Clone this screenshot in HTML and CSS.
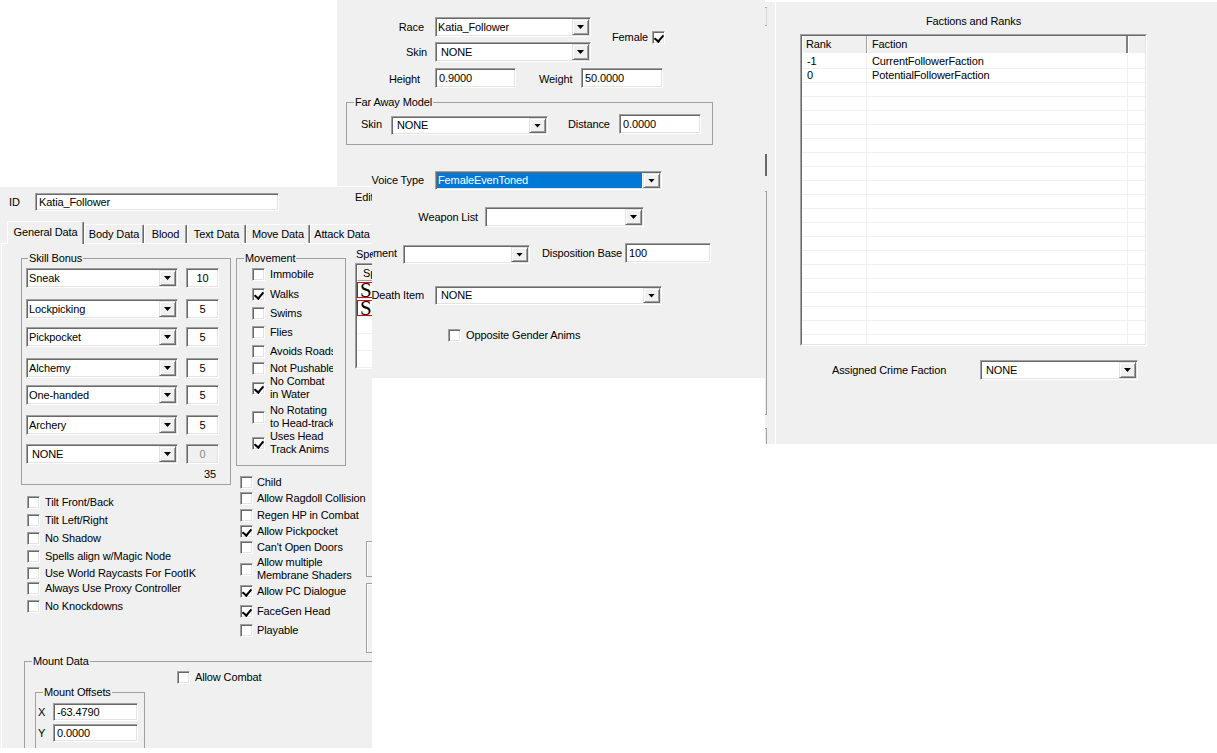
FILE: index.html
```html
<!DOCTYPE html>
<html>
<head>
<meta charset="utf-8">
<title>NPC Editor</title>
<link rel="stylesheet" href="styles.css">
</head>
<body>
<div class="desk">

  <section class="win win-mid">
    <div class="m-top">
      <div class="m-stack">
        <div class="row"><span class="lbl">Race</span><div class="field combo w156"><span class="val">Katia_Follower</span><span class="btn"></span></div></div>
        <div class="row"><span class="lbl pr8">Skin</span><div class="field combo w156"><span class="val ind">NONE</span><span class="btn"></span></div></div>
      </div>
      <div class="female"><span>Female</span><span class="cb on"></span></div>
    </div>
    <div class="row r-hw"><span class="lbl pr15 lo">Height</span><div class="field tb w81">0.9000</div><span class="wlbl lo">Weight</span><div class="field tb w82">50.0000</div></div>
    <fieldset class="grp fam"><legend>Far Away Model</legend>
      <div class="row fam-row"><span class="fam-skin">Skin</span><div class="field combo w157 h19 mt2"><span class="val ind">NONE</span><span class="btn"></span></div><span class="fam-dist">Distance</span><div class="field tb w82">0.0000</div></div>
    </fieldset>
    <div class="row r-voice"><span class="lbl">Voice Type</span><div class="field combo w227 h19 sel"><span class="val">FemaleEvenToned</span><span class="btn"></span></div></div>
    <div class="row r-weapon"><span class="lbl lbl-wl">Weapon List</span><div class="field combo w159"><span class="val"></span><span class="btn"></span></div></div>
    <div class="row r-equip"><span class="lbl lbl-eq">Equipment</span><div class="field combo w127 h19 mt2"><span class="val"></span><span class="btn"></span></div><span class="disp">Disposition Base</span><div class="field tb w86">100</div></div>
    <div class="row r-death"><span class="lbl">Death Item</span><div class="field combo w227 h19"><span class="val ind">NONE</span><span class="btn"></span></div></div>
    <div class="ck r-opp"><span class="cb"></span><span class="t">Opposite Gender Anims</span></div>
  </section>

  <section class="win win-gen">
    <div class="g-id"><span class="g-idl">ID</span><div class="field tb w244 h18">Katia_Follower</div><span class="g-edit">Edit</span></div>
    <div class="tabs">
      <span class="tab act">General Data</span>
      <span class="tab t60">Body Data</span>
      <span class="tab t43">Blood</span>
      <span class="tab t59">Text Data</span>
      <span class="tab t64">Move Data</span>
      <span class="tab t64">Attack Data</span>
    </div>
    <div class="page">
      <div class="cols">
        <div class="colL">
          <fieldset class="grp skill"><legend>Skill Bonus</legend>
            <div class="skrows">
              <div class="skrow"><div class="field combo w152"><span class="val">Sneak</span><span class="btn"></span></div><div class="field num">10</div></div>
              <div class="skrow g11"><div class="field combo w152"><span class="val">Lockpicking</span><span class="btn"></span></div><div class="field num">5</div></div>
              <div class="skrow g8"><div class="field combo w152"><span class="val">Pickpocket</span><span class="btn"></span></div><div class="field num">5</div></div>
              <div class="skrow g11"><div class="field combo w152"><span class="val">Alchemy</span><span class="btn"></span></div><div class="field num">5</div></div>
              <div class="skrow g7"><div class="field combo w152"><span class="val">One-handed</span><span class="btn"></span></div><div class="field num">5</div></div>
              <div class="skrow g10"><div class="field combo w152"><span class="val">Archery</span><span class="btn"></span></div><div class="field num">5</div></div>
              <div class="skrow g9"><div class="field combo w152"><span class="val ind">NONE</span><span class="btn"></span></div><div class="field num dis">0</div></div>
            </div>
            <div class="total">35</div>
          </fieldset>
          <div class="lchecks">
            <div class="ck"><span class="cb"></span><span class="t">Tilt Front/Back</span></div>
            <div class="ck mt5"><span class="cb"></span><span class="t">Tilt Left/Right</span></div>
            <div class="ck mt5"><span class="cb"></span><span class="t">No Shadow</span></div>
            <div class="ck mt5"><span class="cb"></span><span class="t">Spells align w/Magic Node</span></div>
            <div class="ck mt4"><span class="cb"></span><span class="t">Use World Raycasts For FootIK</span></div>
            <div class="ck mt2"><span class="cb"></span><span class="t">Always Use Proxy Controller</span></div>
            <div class="ck mt5"><span class="cb"></span><span class="t">No Knockdowns</span></div>
          </div>
        </div>
        <div class="colM">
          <fieldset class="grp move"><legend>Movement</legend>
            <div class="ck"><span class="cb"></span><span class="t">Immobile</span></div>
            <div class="ck mt7"><span class="cb on"></span><span class="t">Walks</span></div>
            <div class="ck mt6"><span class="cb"></span><span class="t">Swims</span></div>
            <div class="ck mt6"><span class="cb"></span><span class="t">Flies</span></div>
            <div class="ck mt6"><span class="cb"></span><span class="t">Avoids Roads</span></div>
            <div class="ck mt4"><span class="cb"></span><span class="t">Not Pushable</span></div>
            <div class="ck"><span class="cb on"></span><span class="t">No Combat<br>in Water</span></div>
            <div class="ck mt3"><span class="cb"></span><span class="t">No Rotating<br>to Head-track</span></div>
            <div class="ck"><span class="cb on"></span><span class="t">Uses Head<br>Track Anims</span></div>
          </fieldset>
          <div class="rchecks">
            <div class="ck"><span class="cb"></span><span class="t">Child</span></div>
            <div class="ck mt3"><span class="cb"></span><span class="t">Allow Ragdoll Collision</span></div>
            <div class="ck mt4"><span class="cb"></span><span class="t">Regen HP in Combat</span></div>
            <div class="ck mt3"><span class="cb on"></span><span class="t">Allow Pickpocket</span></div>
            <div class="ck mt3"><span class="cb"></span><span class="t">Can't Open Doors</span></div>
            <div class="ck mt2"><span class="cb"></span><span class="t">Allow multiple<br>Membrane Shaders</span></div>
            <div class="ck mt3"><span class="cb on"></span><span class="t">Allow PC Dialogue</span></div>
            <div class="ck mt7"><span class="cb on"></span><span class="t">FaceGen Head</span></div>
            <div class="ck mt6"><span class="cb"></span><span class="t">Playable</span></div>
          </div>
        </div>
        <div class="colR">
          <div class="spl">Spells</div>
          <div class="splist"><div class="splist-in">
            <div class="sph">Sp</div>
            <div class="spr"><span class="sbox">S</span></div>
            <div class="spr"><span class="sbox">S</span></div>
            <div class="spr"></div>
            <div class="spr"></div>
            <div class="spr"></div>
          </div></div>
          <div class="rbtn"></div>
          <div class="rgrp"></div>
        </div>
      </div>
      <fieldset class="grp mount"><legend>Mount Data</legend>
        <div class="ck mc"><span class="cb"></span><span class="t">Allow Combat</span></div>
        <fieldset class="grp offs"><legend>Mount Offsets</legend>
          <div class="offrow"><span class="offl">X</span><div class="field tb w85 h18">-63.4790</div></div>
          <div class="offrow mt3"><span class="offl">Y</span><div class="field tb w85 h18">0.0000</div></div>
        </fieldset>
      </fieldset>
    </div>
  </section>

  <section class="win win-fac">
    <div class="edge"><i class="e1"></i><i class="e2"></i><i class="e3"></i><i class="e4"></i></div>
    <div class="vline"></div>
    <div class="fac-main">
      <div class="fac-title">Factions and Ranks</div>
      <div class="lv"><div class="lv-in">
        <div class="lv-head"><span class="c1">Rank</span><span class="c2">Faction</span><span class="c3"></span></div>
        <div class="lv-body">
          <div class="lv-row"><span class="c1">-1</span><span class="c2">CurrentFollowerFaction</span><span class="c3"></span></div>
          <div class="lv-row"><span class="c1">0</span><span class="c2">PotentialFollowerFaction</span><span class="c3"></span></div>
          <div class="lv-row"><span class="c1"></span><span class="c2"></span><span class="c3"></span></div>
          <div class="lv-row"><span class="c1"></span><span class="c2"></span><span class="c3"></span></div>
          <div class="lv-row"><span class="c1"></span><span class="c2"></span><span class="c3"></span></div>
          <div class="lv-row"><span class="c1"></span><span class="c2"></span><span class="c3"></span></div>
          <div class="lv-row"><span class="c1"></span><span class="c2"></span><span class="c3"></span></div>
          <div class="lv-row"><span class="c1"></span><span class="c2"></span><span class="c3"></span></div>
          <div class="lv-row"><span class="c1"></span><span class="c2"></span><span class="c3"></span></div>
          <div class="lv-row"><span class="c1"></span><span class="c2"></span><span class="c3"></span></div>
          <div class="lv-row"><span class="c1"></span><span class="c2"></span><span class="c3"></span></div>
          <div class="lv-row"><span class="c1"></span><span class="c2"></span><span class="c3"></span></div>
          <div class="lv-row"><span class="c1"></span><span class="c2"></span><span class="c3"></span></div>
          <div class="lv-row"><span class="c1"></span><span class="c2"></span><span class="c3"></span></div>
          <div class="lv-row"><span class="c1"></span><span class="c2"></span><span class="c3"></span></div>
          <div class="lv-row"><span class="c1"></span><span class="c2"></span><span class="c3"></span></div>
          <div class="lv-row"><span class="c1"></span><span class="c2"></span><span class="c3"></span></div>
          <div class="lv-row"><span class="c1"></span><span class="c2"></span><span class="c3"></span></div>
          <div class="lv-row"><span class="c1"></span><span class="c2"></span><span class="c3"></span></div>
          <div class="lv-row"><span class="c1"></span><span class="c2"></span><span class="c3"></span></div>
          <div class="lv-row"><span class="c1"></span><span class="c2"></span><span class="c3"></span></div>
        </div>
      </div></div>
      <div class="crime"><span class="crime-l">Assigned Crime Faction</span><div class="field combo w158"><span class="val ind">NONE</span><span class="btn"></span></div></div>
    </div>
  </section>

</div>
</body>
</html>
```

FILE: styles.css
```css
* { box-sizing: border-box; }
html, body { margin: 0; padding: 0; background: #fff; }
body { font: 11px/13px "Liberation Sans", Arial, sans-serif; color: #000; letter-spacing: -0.12px; }

.desk { position: relative; width: 1217px; height: 753px; overflow: hidden; background: #fff; }
.win { position: absolute; background: #f0f0f0; overflow: hidden; }

/* ---------- shared controls ---------- */
.row { display: flex; align-items: center; }
.field {
  flex: none; display: flex; align-items: center; height: 20px;
  background: #fff; border: 1px solid; border-color: #a0a0a0 #fff #fff #a0a0a0;
  box-shadow: inset 1px 1px 0 #696969, inset -1px -1px 0 #e3e3e3;
  white-space: nowrap; overflow: hidden;
}
.tb { padding: 0 2px 0 3px; }
.h18 { height: 18px; }
.h19 { height: 19px; }
.combo { padding: 1px; }
.combo .val { flex: 1; min-width: 0; overflow: hidden; padding-left: 1px; align-self: stretch; display: flex; align-items: center; }
.combo .val.ind { padding-left: 4px; }
.combo.sel .val { background: #0078d7; color: #fff; margin-right: 1px; padding-left: 1px; }
.btn {
  flex: none; width: 17px; height: 16px; background: #f0f0f0;
  border: 1px solid; border-color: #e3e3e3 #696969 #696969 #e3e3e3;
  box-shadow: inset 1px 1px 0 #fff, inset -1px -1px 0 #a0a0a0;
  display: flex; align-items: center; justify-content: center; align-self: center;
}
.h19 .btn { height: 15px; }
.btn::after { content: ""; width: 7px; height: 4px; background: #000; clip-path: polygon(0 0, 100% 0, 50% 100%); }

.cb {
  flex: none; width: 13px; height: 13px; position: relative; background: #fff;
  border: 1px solid; border-color: #a0a0a0 #fff #fff #a0a0a0;
  box-shadow: inset 1px 1px 0 #696969, inset -1px -1px 0 #e3e3e3;
}
.cb.on::after {
  content: ""; position: absolute; left: 3px; top: 1px; width: 4px; height: 7px;
  border: solid #000; border-width: 0 2px 2px 0; transform: rotate(40deg);
}
.ck { display: flex; align-items: center; }
.ck .t { margin-left: 5px; white-space: nowrap; }

.grp { margin: 0; padding: 0; min-width: 0; border: 1px solid #a0a0a0; }
.grp > legend { padding: 0 1px; margin-left: 7px; line-height: 12px; }

.w81 { width: 81px; } .w82 { width: 82px; } .w85 { width: 85px; } .w86 { width: 86px; }
.w127 { width: 127px; } .w152 { width: 152px; } .w156 { width: 156px; } .w157 { width: 157px; }
.w158 { width: 158px; } .w159 { width: 159px; } .w227 { width: 227px; } .w244 { width: 244px; }
.mt2 { margin-top: 2px; } .mt3 { margin-top: 3px; } .mt4 { margin-top: 4px; }
.mt5 { margin-top: 5px; } .mt6 { margin-top: 6px; } .mt7 { margin-top: 7px; }

/* ---------- middle window ---------- */
.win-mid {
  left: 337px; top: 0; width: 428px; height: 378px; z-index: 3; padding-top: 17px;
  clip-path: polygon(0 0, 100% 0, 100% 100%, 35px 100%, 35px 186px, 0 186px);
}
.lbl { flex: none; width: 98px; padding-right: 11px; text-align: right; white-space: nowrap; }
.lbl.pr8 { padding-right: 8px; }
.lbl.pr15 { padding-right: 15px; }
.lo { position: relative; top: 1px; }
.m-top { display: flex; align-items: center; }
.m-stack { display: flex; flex-direction: column; gap: 5px; }
.female { display: flex; align-items: center; gap: 4px; margin-left: 21px; margin-bottom: 4px; }
.r-hw { margin-top: 6px; }
.wlbl { flex: none; width: 42px; margin-left: 23px; }
.fam { margin: 8px 0 0 9px; width: 367px; padding: 6px 0 9px 14px; }
.fam > legend { margin-left: -7px; }
.fam-row { align-items: flex-start; height: 21px; }
.fam-skin { flex: none; width: 30px; line-height: 21px; }
.fam-dist { flex: none; width: 51px; margin-left: 20px; line-height: 21px; }
.r-voice { margin-top: 26px; }
.r-weapon { margin-top: 17px; }
.lbl-wl { width: 148px; padding-right: 7px; }
.r-equip { margin-top: 16px; align-items: flex-start; }
.lbl-eq { width: 66px; padding-right: 6px; line-height: 21px; }
.disp { flex: none; width: 83px; margin-left: 12px; line-height: 21px; white-space: nowrap; }
.r-death { margin-top: 22px; }
.r-opp { margin: 24px 0 0 111px; }

/* ---------- general data window ---------- */
.win-gen { left: 0; top: 186px; width: 372px; height: 562px; z-index: 2; border-top: 1px solid #fff; }
.g-id { display: flex; align-items: center; padding: 6px 0 0 9px; }
.g-idl { flex: none; width: 26px; }
.g-edit { flex: none; margin-left: 76px; align-self: flex-start; margin-top: -2px; white-space: nowrap; }
.tabs { display: flex; align-items: flex-end; height: 22px; margin-top: 10px; padding-left: 7px; }
.tab {
  flex: none; height: 19px; display: flex; align-items: center; justify-content: center; white-space: nowrap;
  border: 1px solid; border-bottom: 0; border-color: #fff #696969 transparent #fff;
  box-shadow: inset -1px 0 0 #a0a0a0; border-radius: 2px 2px 0 0;
}
.tab.act { width: 77px; height: 23px; margin-bottom: -1px; position: relative; z-index: 1; background: #f0f0f0; padding-bottom: 1px; }
.t43 { width: 43px; } .t59 { width: 59px; } .t60 { width: 60px; } .t64 { width: 64px; }
.page { margin-left: 1px; border-top: 1px solid #fff; border-left: 1px solid #fff; height: 510px; }
.cols { display: flex; height: 411px; padding-top: 8px; }
.colL { flex: none; width: 210px; margin-left: 19px; display: flex; flex-direction: column; }
.skill { width: 210px; padding: 4px 0 2px 4px; }
.skill > legend { margin-left: 2px; }
.skrows { display: flex; flex-direction: column; }
.skrow { display: flex; align-items: center; gap: 8px; }
.g7 { margin-top: 7px; } .g8 { margin-top: 8px; } .g9 { margin-top: 9px; }
.g10 { margin-top: 10px; } .g11 { margin-top: 11px; }
.num { width: 33px; justify-content: center; }
.num.dis { background: #f0f0f0; color: #8a8a8a; }
.total { margin-top: 4px; height: 14px; text-align: right; padding-right: 14px; }
.lchecks { margin: 11px 0 0 6px; display: flex; flex-direction: column; }
.colM { flex: none; width: 110px; margin-left: 5px; display: flex; flex-direction: column; }
.move { width: 110px; padding: 4px 0 9px 15px; }
.move > legend { margin-left: -8px; }
.move .t { width: 63px; overflow: hidden; }
.rchecks { margin: 10px 0 0 4px; display: flex; flex-direction: column; }
.rchecks .t { margin-left: 4px; }
.colR { flex: 1; margin-left: 4px; display: flex; flex-direction: column; }
.spl { margin: -4px 0 0 6px; white-space: nowrap; }
.splist {
  margin: 2px 0 0 5px; width: 60px; height: 106px; flex: none;
  border: 1px solid; border-color: #a0a0a0 #fff #fff #a0a0a0;
}
.splist-in { height: 100%; border: 1px solid; border-color: #696969 #e3e3e3 #e3e3e3 #696969; background: #fff; }
.sph { height: 16px; background: #f0f0f0; border-top: 1px solid #fff; border-left: 1px solid #fff; border-bottom: 1px solid #a0a0a0; padding-left: 5px; display: flex; align-items: center; }
.spr { height: 17px; border-bottom: 1px solid #f0f0f0; }
.sbox {
  display: block; margin: 1px 0 0 0; height: 16px; border: 1px solid #e00000; padding-left: 2px;
  font: 21px/14px "Liberation Serif", "Times New Roman", serif; color: #000;
}
.rbtn { margin: 172px 0 0 16px; width: 20px; height: 36px; flex: none; border: 1px solid #a0a0a0; box-shadow: inset 1px 1px 0 #fff; }
.rgrp { margin: 6px 0 0 16px; width: 20px; height: 70px; flex: none; border: 1px solid #a0a0a0; box-shadow: inset 1px 1px 0 #fff; }
.mount { margin-left: 22px; width: 400px; height: 120px; padding: 4px 0 0 0; }
.mc { margin-left: 152px; }
.offs { margin: 2px 0 0 10px; width: 110px; height: 80px; padding: 5px 0 0 2px; }
.offs > legend { margin-left: 5px; }
.offrow { display: flex; align-items: center; }
.offl { flex: none; width: 15px; }

/* ---------- factions window ---------- */
.win-fac { left: 765px; top: 2px; width: 452px; height: 442px; z-index: 1; display: flex; }
.edge { flex: none; width: 10px; display: flex; flex-direction: column; }
.edge i { display: block; flex: none; }
.e1 { margin-top: 5px; height: 19px; width: 2px; border-right: 1px solid #d8d8d8; border-top: 1px solid #a0a0a0; border-bottom: 1px solid #a0a0a0; }
.e2 { margin-top: 128px; height: 22px; width: 2px; background: #696969; }
.e3 { margin-top: 15px; height: 224px; width: 2px; border-right: 1px solid #a0a0a0; border-top: 1px solid #a0a0a0; border-bottom: 1px solid #a0a0a0; }
.e4 { margin-top: 13px; height: 16px; width: 2px; border-right: 1px solid #a0a0a0; border-top: 1px solid #a0a0a0; }
.vline { flex: none; width: 1px; background: #fff; }
.fac-main { flex: none; padding-left: 24px; }
.fac-title { width: 347px; margin-top: 13px; text-align: center; }
.lv { margin-top: 6px; width: 347px; height: 312px; border: 1px solid; border-color: #a0a0a0 #fff #fff #a0a0a0; }
.lv-in { height: 100%; overflow: hidden; background: #fff; border: 1px solid; border-color: #696969 #e3e3e3 #e3e3e3 #696969; }
.lv-head { display: flex; height: 17px; background: #f0f0f0; }
.lv-head span { display: flex; align-items: center; border-right: 1px solid #a0a0a0; box-shadow: inset 1px 0 0 #fff; }
.lv-head .c1 { width: 65px; padding-left: 4px; }
.lv-head .c2 { width: 261px; padding-left: 5px; border-right: 2px solid #808080; }
.lv-head .c3 { flex: 1; border-right: 0; }
.lv-body { padding-top: 2px; }
.lv-row { display: flex; height: 14px; border-bottom: 1px solid #f0f0f0; }
.lv-row span { display: flex; align-items: center; border-right: 1px solid #f0f0f0; white-space: nowrap; }
.lv-row .c1 { width: 65px; padding-left: 5px; }
.lv-row .c2 { width: 261px; padding-left: 5px; }
.lv-row .c3 { flex: 1; border-right: 0; }
.crime { display: flex; align-items: center; margin-top: 14px; }
.crime-l { width: 180px; padding-left: 32px; white-space: nowrap; }
```
